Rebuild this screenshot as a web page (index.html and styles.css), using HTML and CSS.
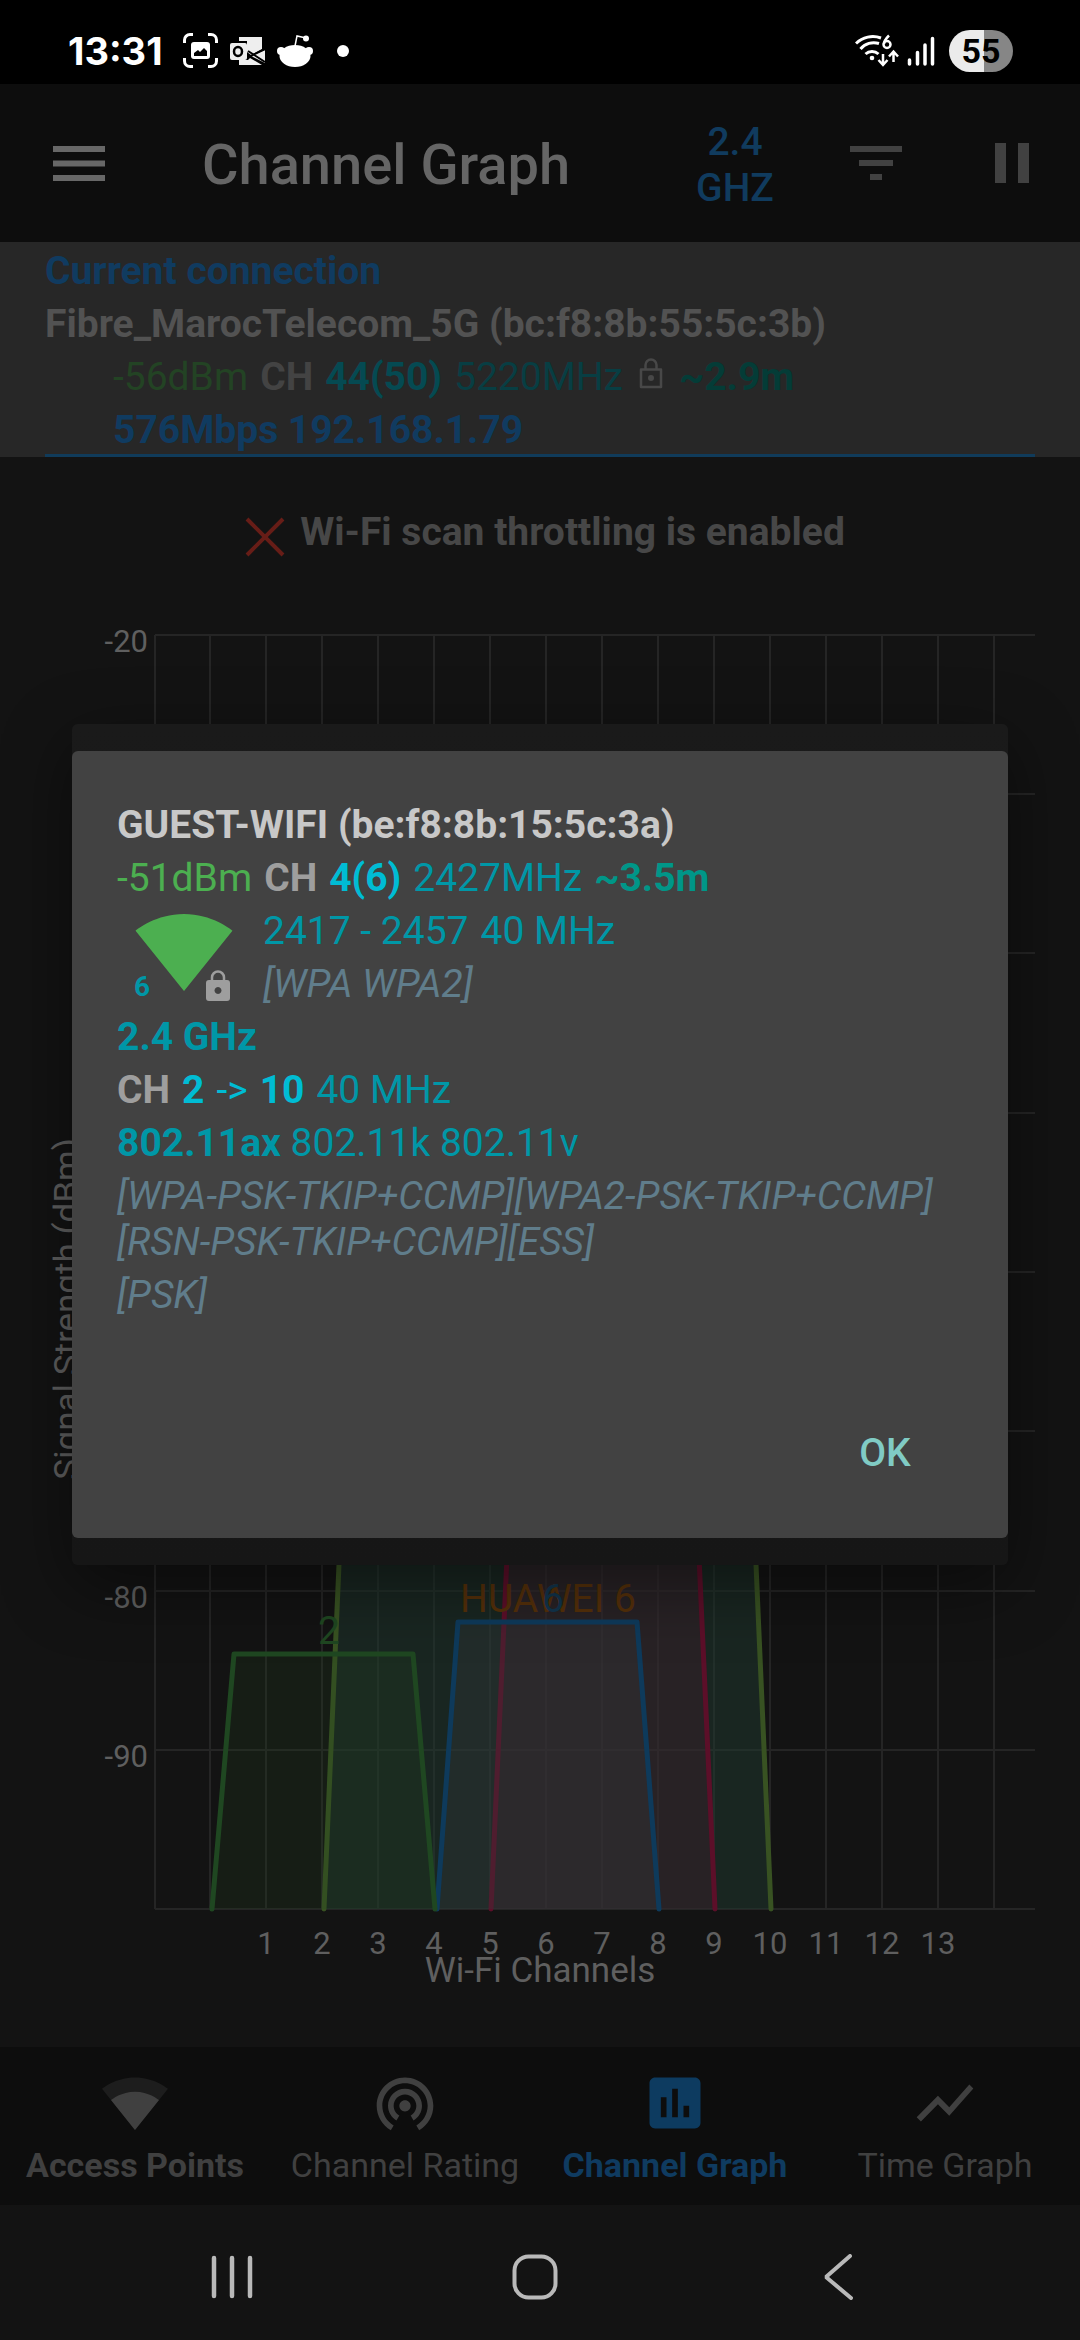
FILE: index.html
```html
<!DOCTYPE html>
<html lang="en">
<head>
<meta charset="utf-8">
<meta name="viewport" content="width=device-width, initial-scale=1">
<title>Channel Graph</title>
<link rel="stylesheet" href="styles.css">
</head>
<body>
<div class="screen">
  <div class="status">
    <span class="clock">13:31</span>
    <svg class="st-shot" width="35" height="35" viewBox="0 0 35 35" aria-hidden="true"><path d="M1.500 10V7a5.500 5.500 0 0 1 5.500-5.500h3M25 1.500h3A5.500 5.500 0 0 1 33.500 7v3M33.500 25v3a5.500 5.500 0 0 1-5.500 5.500h-3M10 33.500H7A5.500 5.500 0 0 1 1.500 28v-3" fill="none" stroke="#fff" stroke-width="3"/><rect x="8" y="9" width="19" height="17" rx="3" fill="#fff"/><path d="M11 23v-3l4-3 2 2 4-4 3 3v5z" fill="#000"/></svg>
    <svg class="st-mail" width="37" height="30" viewBox="0 0 37 30" aria-hidden="true"><path d="M10 1h23v12l-11 6-4-3V5h-8z" fill="#eee"/><path d="M36 14v13L22 20zM10 24h9l2-2 12 7H10z" fill="#eee"/><path d="M19 15l17 11M36 13L20 21" stroke="#000" stroke-width="2"/><rect x="1" y="7" width="17" height="17" rx="2" fill="#eee"/><ellipse cx="9" cy="15.500" rx="4" ry="4.500" fill="none" stroke="#000" stroke-width="2.500"/></svg>
    <svg class="st-alien" width="36" height="33" viewBox="0 0 36 33" aria-hidden="true"><ellipse cx="18" cy="22" rx="15.500" ry="11" fill="#fff"/><circle cx="4" cy="17" r="4" fill="#fff"/><circle cx="32" cy="17" r="4" fill="#fff"/><path d="M18 12l2-10 9 2" fill="none" stroke="#fff" stroke-width="1.500"/><circle cx="29" cy="4.500" r="3" fill="#fff"/></svg>
    <span class="st-dot"></span>
    <svg class="st-wifi" width="44" height="34" viewBox="0 0 44 34" aria-hidden="true"><g fill="none" stroke="#fff" stroke-width="3"><path d="M1 9.500A24 24 0 0 1 26 4M5.500 15A17 17 0 0 1 24 9.500M10.500 20a9.500 9.500 0 0 1 13 0"/><path d="M28 20v10M23.500 26l4.500 5 4.500-5M38.500 28V18M34 22.500l4.500-5 4.500 5" stroke-width="2.500"/><path d="M34 1.500c-3 3-5 6-5 8.500" stroke-width="2.500"/><circle cx="32" cy="10.500" r="3.500" stroke-width="2.500"/></g><circle cx="17" cy="24" r="2.300" fill="#fff"/></svg>
    <svg class="st-signal" width="28" height="30" viewBox="0 0 28 30" aria-hidden="true"><path d="M2.500 24v4M10.500 16.500V28M18 9v19M25.500 2.500V28" stroke="#fff" stroke-width="3.500" stroke-linecap="round"/></svg>
    <span class="battery">55</span>
  </div>

  <div class="app">
    <header class="toolbar">
      <button class="icon-btn menu" aria-label="Open menu"><svg width="52" height="35" viewBox="0 0 52 35"><path d="M0 0h52v6H0zM0 14.500h52v6H0zM0 29h52v6H0z" fill="#676767"/></svg></button>
      <h1>Channel Graph</h1>
      <button class="band">2.4 GHZ</button>
      <button class="icon-btn filter" aria-label="Filter"><svg width="52" height="35" viewBox="0 0 52 35"><path d="M0 0h52v6H0zM9 14h34v6H9zM20 28h12v6H20z" fill="#414141"/></svg></button>
      <button class="icon-btn" aria-label="Pause scanning"><svg width="34" height="40" viewBox="0 0 34 40"><path d="M0 0h11v40H0zM23 0h11v40H23z" fill="#414141"/></svg></button>
    </header>

    <section class="connection">
      <p class="blue">Current connection</p>
      <p class="ssid-dim">Fibre_MarocTelecom_5G (bc:f8:8b:55:5c:3b)</p>
      <p class="inset fields"><span class="d-level">-56dBm</span> <b class="d-ch">CH</b> <b class="d-chan">44(50)</b> <span class="d-freq">5220MHz</span> <svg class="lock-dim" width="24" height="32" viewBox="0 0 24 32" aria-hidden="true"><path d="M2 11.500h20v17.500H2zM6.500 11V7a5.500 5.500 0 0 1 11 0v4" fill="none" stroke="#484848" stroke-width="2.500" stroke-linejoin="round"/><circle cx="12" cy="20" r="3" fill="#484848"/></svg> <b class="d-dist">~2.9m</b></p>
      <p class="inset blue">576Mbps 192.168.1.79</p>
    </section>

    <main>
      <p class="throttle"><svg width="40" height="40" viewBox="0 0 40 40" aria-hidden="true"><path d="M2 2l36 36M38 2L2 38" stroke="#671d17" stroke-width="4"/></svg>Wi-Fi scan throttling is enabled</p>
      <svg class="chart" viewBox="0 600 1080 1447" role="img" aria-label="Signal strength by Wi-Fi channel">
        <path class="grid" d="M155 635H1035M155 794H1035M155 953H1035M155 1113H1035M155 1272H1035M155 1431H1035M155 1591H1035M155 1750H1035M155 1909H1035M155 635V1909M210 635V1909M266 635V1909M322 635V1909M378 635V1909M434 635V1909M490 635V1909M546 635V1909M602 635V1909M658 635V1909M714 635V1909M770 635V1909M826 635V1909M882 635V1909M938 635V1909M994 635V1909"/>
        <g class="curve">
          <path d="M324 1909L358 1128H737L771 1909" fill="#1f392f" fill-opacity=".5" stroke="#385222"/>
          <path d="M491 1909L525 1160H681L715 1909" fill="#4b1c2f" fill-opacity=".3" stroke="#5c0f29"/>
          <text x="548" y="1612" fill="#55300a">HUAWEI 6</text>
          <path d="M437 1909L458 1622H637L659 1909" fill="#373b3c" fill-opacity=".33" stroke="#0e3a5b"/>
          <path d="M212 1909L234 1654H413L435 1909" fill="#22451d" fill-opacity=".2" stroke="#1f4721"/>
          <text x="553" y="1612" fill="#12354d">6</text>
          <text x="329" y="1644" fill="#1f4721">2</text>
        </g>
        <g class="ylab"><text x="148" y="652">-20</text><text x="148" y="1608">-80</text><text x="148" y="1767">-90</text></g>
        <g class="xlab"><text x="266" y="1954">1</text><text x="322" y="1954">2</text><text x="378" y="1954">3</text><text x="434" y="1954">4</text><text x="490" y="1954">5</text><text x="546" y="1954">6</text><text x="602" y="1954">7</text><text x="658" y="1954">8</text><text x="714" y="1954">9</text><text x="770" y="1954">10</text><text x="826" y="1954">11</text><text x="882" y="1954">12</text><text x="938" y="1954">13</text></g>
        <text class="axis" x="540" y="1982">Wi-Fi Channels</text>
        <text class="axis" transform="translate(79 1309) rotate(-90)">Signal Strength (dBm)</text>
      </svg>
    </main>

    <nav class="tabs">
      <a href="#access" class="bold"><svg width="68" height="68" viewBox="0 0 24 24"><path d="M12.010 21.490L23.640 7c-.45-.34-4.930-4-11.640-4C5.280 3 .81 6.660.36 7l11.630 14.490z" fill="#1d1d1d"/><path d="M3.530 10.950l8.460 10.540 8.480-10.540C20.040 10.620 16.810 8 12 8s-8.040 2.620-8.470 2.950z" fill="#404040"/></svg>Access Points</a>
      <a href="#rating"><svg width="68" height="68" viewBox="0 0 24 24"><path d="M12 11c-1.100 0-2 .9-2 2s.9 2 2 2 2-.9 2-2-.9-2-2-2zm6 2c0-3.310-2.690-6-6-6s-6 2.690-6 6c0 2.220 1.210 4.150 3 5.190l1-1.740c-1.190-.7-2-1.970-2-3.450 0-2.210 1.790-4 4-4s4 1.790 4 4c0 1.480-.81 2.750-2 3.450l1 1.740c1.790-1.040 3-2.970 3-5.190zM12 3C6.480 3 2 7.480 2 13c0 3.700 2.010 6.920 4.990 8.650l1-1.730C5.610 18.530 4 15.960 4 13c0-4.420 3.580-8 8-8s8 3.580 8 8c0 2.960-1.610 5.530-4 6.920l1 1.730c2.990-1.730 5-4.950 5-8.650 0-5.520-4.480-10-10-10z" fill="#404040"/></svg>Channel Rating</a>
      <a href="#graph" class="bold active" aria-current="page"><svg width="68" height="68" viewBox="0 0 24 24"><path d="M19 3H5c-1.100 0-2 .9-2 2v14c0 1.100.9 2 2 2h14c1.100 0 2-.9 2-2V5c0-1.100-.9-2-2-2zM9 17H7v-7h2v7zm4 0h-2V7h2v10zm4 0h-2v-4h2v4z" fill="#0d3b60"/></svg>Channel Graph</a>
      <a href="#time"><svg width="68" height="68" viewBox="0 0 24 24"><path d="M3.500 18.490l6-6.010 4 4L22 6.920l-1.410-1.410-7.090 7.970-4-4L2 16.990z" fill="#404040"/></svg>Time Graph</a>
    </nav>

    <div class="overlay">
      <div class="backplate">
      <div class="dialog" role="dialog" aria-label="Access point details">
        <p class="ssid">GUEST-WIFI (be:f8:8b:15:5c:3a)</p>
        <p class="fields"><span class="level">-51dBm</span> <b class="ch">CH</b> <b class="chan">4(6)</b> <span class="freq">2427MHz</span> <b class="dist">~3.5m</b></p>
        <div class="signal">
          <div class="signal-icon">
            <svg width="100" height="77" viewBox="0 3 24 18.500" aria-hidden="true"><path d="M12.010 21.490L23.640 7c-.45-.34-4.930-4-11.640-4C5.280 3 .81 6.660.36 7l11.630 14.490z" fill="#4caf50"/></svg>
            <span class="gen">6</span>
            <svg class="lock" width="24" height="31" viewBox="0 0 24 31" aria-hidden="true"><path d="M6 12V7.500a6 6 0 0 1 12 0V12" fill="none" stroke="#9e9e9e" stroke-width="2.500"/><path fill-rule="evenodd" d="M3 10h18a3 3 0 0 1 3 3v15a3 3 0 0 1-3 3H3a3 3 0 0 1-3-3V13a3 3 0 0 1 3-3zm9 7a3.500 3.500 0 1 0 .01 0z" fill="#9e9e9e"/></svg>
          </div>
          <div>
            <p class="fields freq"><span>2417 - 2457</span> <span>40 MHz</span></p>
            <p class="caps">[WPA WPA2]</p>
          </div>
        </div>
        <p class="freq"><b>2.4 GHz</b></p>
        <p class="fields"><b class="ch">CH</b> <b class="chan">2</b> <span class="chan">-&gt;</span> <b class="chan">10</b> <span class="freq">40 MHz</span></p>
        <p class="freq"><b>802.11ax</b> 802.11k 802.11v</p>
        <p class="caps">[WPA-PSK-TKIP+CCMP][WPA2-PSK-TKIP+CCMP]<wbr>[RSN-PSK-TKIP+CCMP][ESS]</p>
        <p class="caps">[PSK]</p>
        <button class="ok">OK</button>
      </div>
      </div>
    </div>
  </div>

  <div class="sysnav">
    <button aria-label="Recent apps"><svg width="42" height="46" viewBox="0 0 42 46"><path d="M3 4v38M21 4v38M39 4v38" stroke="#b9b9b9" stroke-width="4.500" stroke-linecap="round"/></svg></button>
    <button aria-label="Home"><svg width="46" height="46" viewBox="0 0 46 46"><rect x="2.500" y="2.500" width="41" height="41" rx="14" fill="none" stroke="#b9b9b9" stroke-width="4"/></svg></button>
    <button aria-label="Back"><svg width="30" height="46" viewBox="0 0 30 46"><path d="M27 2L3 23l25 21" fill="none" stroke="#b9b9b9" stroke-width="4" stroke-linecap="round" stroke-linejoin="bevel"/></svg></button>
  </div>
</div>
</body>
</html>
```
FILE: styles.css
```css
* { box-sizing: border-box; }
body {
  margin: 0;
  background: #131313;
  color: #656565;
  font: 39px/46px Roboto, "Liberation Sans", sans-serif;
}
p, h1 { margin: 0; }
button {
  border: 0;
  padding: 0;
  background: none;
  color: inherit;
  font: inherit;
}
svg { display: block; flex: none; }
b { font-weight: 700; }

.screen { display: flex; flex-direction: column; min-height: 100vh; }

/* One line of separately coloured values */
.fields { display: flex; align-items: baseline; gap: 12px; }

/* System status bar */
.status {
  display: flex;
  align-items: center;
  height: 84px;
  padding: 17px 67px 0 68px;
  background: #000;
  color: #fff;
}
.clock {
  margin-right: 20px;
  font: 700 38px/46px Inter, sans-serif;
}
.st-shot { margin-right: 11px; }
.st-mail { margin-right: 11px; }
.st-alien { margin-right: 24px; }
.st-dot { width: 12px; height: 12px; border-radius: 50%; background: #fff; }
.st-wifi { margin-left: auto; }
.st-signal { margin: 0 14px 0 8px; }
.battery {
  width: 64px;
  height: 42px;
  border-radius: 21px;
  background: linear-gradient(90deg, #ebebeb 54%, #868686 54%);
  color: #000;
  font-size: 34px;
  font-weight: 700;
  line-height: 42px;
  text-align: center;
}

.app { position: relative; display: flex; flex: 1; flex-direction: column; }

/* Toolbar */
.toolbar {
  display: flex;
  align-items: center;
  height: 158px;
  padding: 0 51px 0 53px;
  background: #0d0d0d;
}
h1 {
  margin: 0 auto 0 97px;
  padding-top: 4px;
  font-size: 56px;
  line-height: 66px;
  font-weight: 500;
}
.icon-btn { display: grid; place-items: center; }
.band {
  width: 120px;
  margin-right: 55px;
  padding-top: 4px;
  color: #103b5e;
  font-weight: 500;
}
.filter { margin-right: 93px; }

/* Current connection */
.connection {
  padding: 0 45px 3px;
  background: linear-gradient(#103b5a, #103b5a) 50% 100% / calc(100% - 90px) 3px no-repeat #272727;
  font-weight: 700;
}
.connection p { padding: 6px 0 1px; }
.connection .inset { padding-left: 68px; }
.blue { color: #103b60; }
.ssid-dim { color: #525252; }
.d-level, .d-freq { font-weight: 400; }
.d-level { color: #234324; }
.d-ch { color: #434343; }
.d-chan { color: #054a52; }
.d-freq { color: #083e43; }
.d-dist { color: #043c37; }
.lock-dim { margin: 0 4px; }

/* Chart */
main { flex: 1; }
.throttle {
  display: flex;
  justify-content: center;
  align-items: center;
  gap: 15px;
  height: 143px;
  padding: 6px 0 0 10px;
  color: #474747;
  font-weight: 700;
}
.throttle svg { margin-top: 10px; }
.chart { width: 100%; height: auto; }
.grid { fill: none; stroke: #252525; stroke-width: 2; }
.curve path { stroke-width: 5; stroke-linecap: round; stroke-linejoin: round; }
.curve text { font-size: 39px; text-anchor: middle; }
.ylab, .xlab { font-size: 31px; fill: #5f5f5f; }
.ylab { text-anchor: end; }
.xlab { text-anchor: middle; }
.axis { font-size: 35px; fill: #5f5f5f; text-anchor: middle; }

/* Bottom tabs */
.tabs {
  display: grid;
  grid-template-columns: repeat(4, 1fr);
  height: 158px;
  padding-top: 22px;
  background: #0d0d0d;
}
.tabs a {
  display: flex;
  flex-direction: column;
  align-items: center;
  gap: 8px;
  color: #404040;
  font-size: 34px;
  line-height: 40px;
  text-decoration: none;
  white-space: nowrap;
}
.tabs .bold { font-weight: 700; }
.tabs .active { color: #0f3b60; }

/* Access point dialog */
.overlay {
  position: absolute;
  inset: 0;
  display: grid;
  align-items: center;
  padding: 0 72px;
}
.backplate {
  padding: 27px 0;
  border-radius: 6px;
  background: linear-gradient(#1a1a1a, #161616);
  box-shadow: 0 20px 70px rgba(0, 0, 0, .45);
}
.dialog {
  display: flex;
  flex-direction: column;
  gap: 7px;
  padding: 51px 33px 35px 45px;
  border-radius: 6px;
  background: #424242;
}
.ssid { color: #c8c8c8; font-weight: 700; }
.level { color: #4caf50; }
.ch { color: #9e9e9e; }
.chan { color: #00bcd4; }
.freq { color: #0097a7; }
.dist { color: #009688; }
.caps { color: #607d8b; font-style: italic; }
.signal { display: flex; }
.signal p + p { margin-top: 7px; }
.signal-icon { position: relative; width: 146px; padding: 6px 0 0 17px; }
.gen {
  position: absolute;
  left: 17px;
  bottom: 4px;
  color: #0097a7;
  font-size: 28px;
  font-weight: 700;
  line-height: 32px;
}
.lock { position: absolute; left: 89px; bottom: 6px; }
.ok {
  align-self: flex-end;
  width: 180px;
  height: 101px;
  margin-top: 77px;
  color: #80cbc4;
  font-weight: 500;
}

/* System navigation */
.sysnav {
  display: flex;
  justify-content: space-between;
  align-items: center;
  height: 135px;
  padding: 8px 212px 0 202px;
}
.sysnav button { display: grid; place-items: center; width: 60px; }
```
